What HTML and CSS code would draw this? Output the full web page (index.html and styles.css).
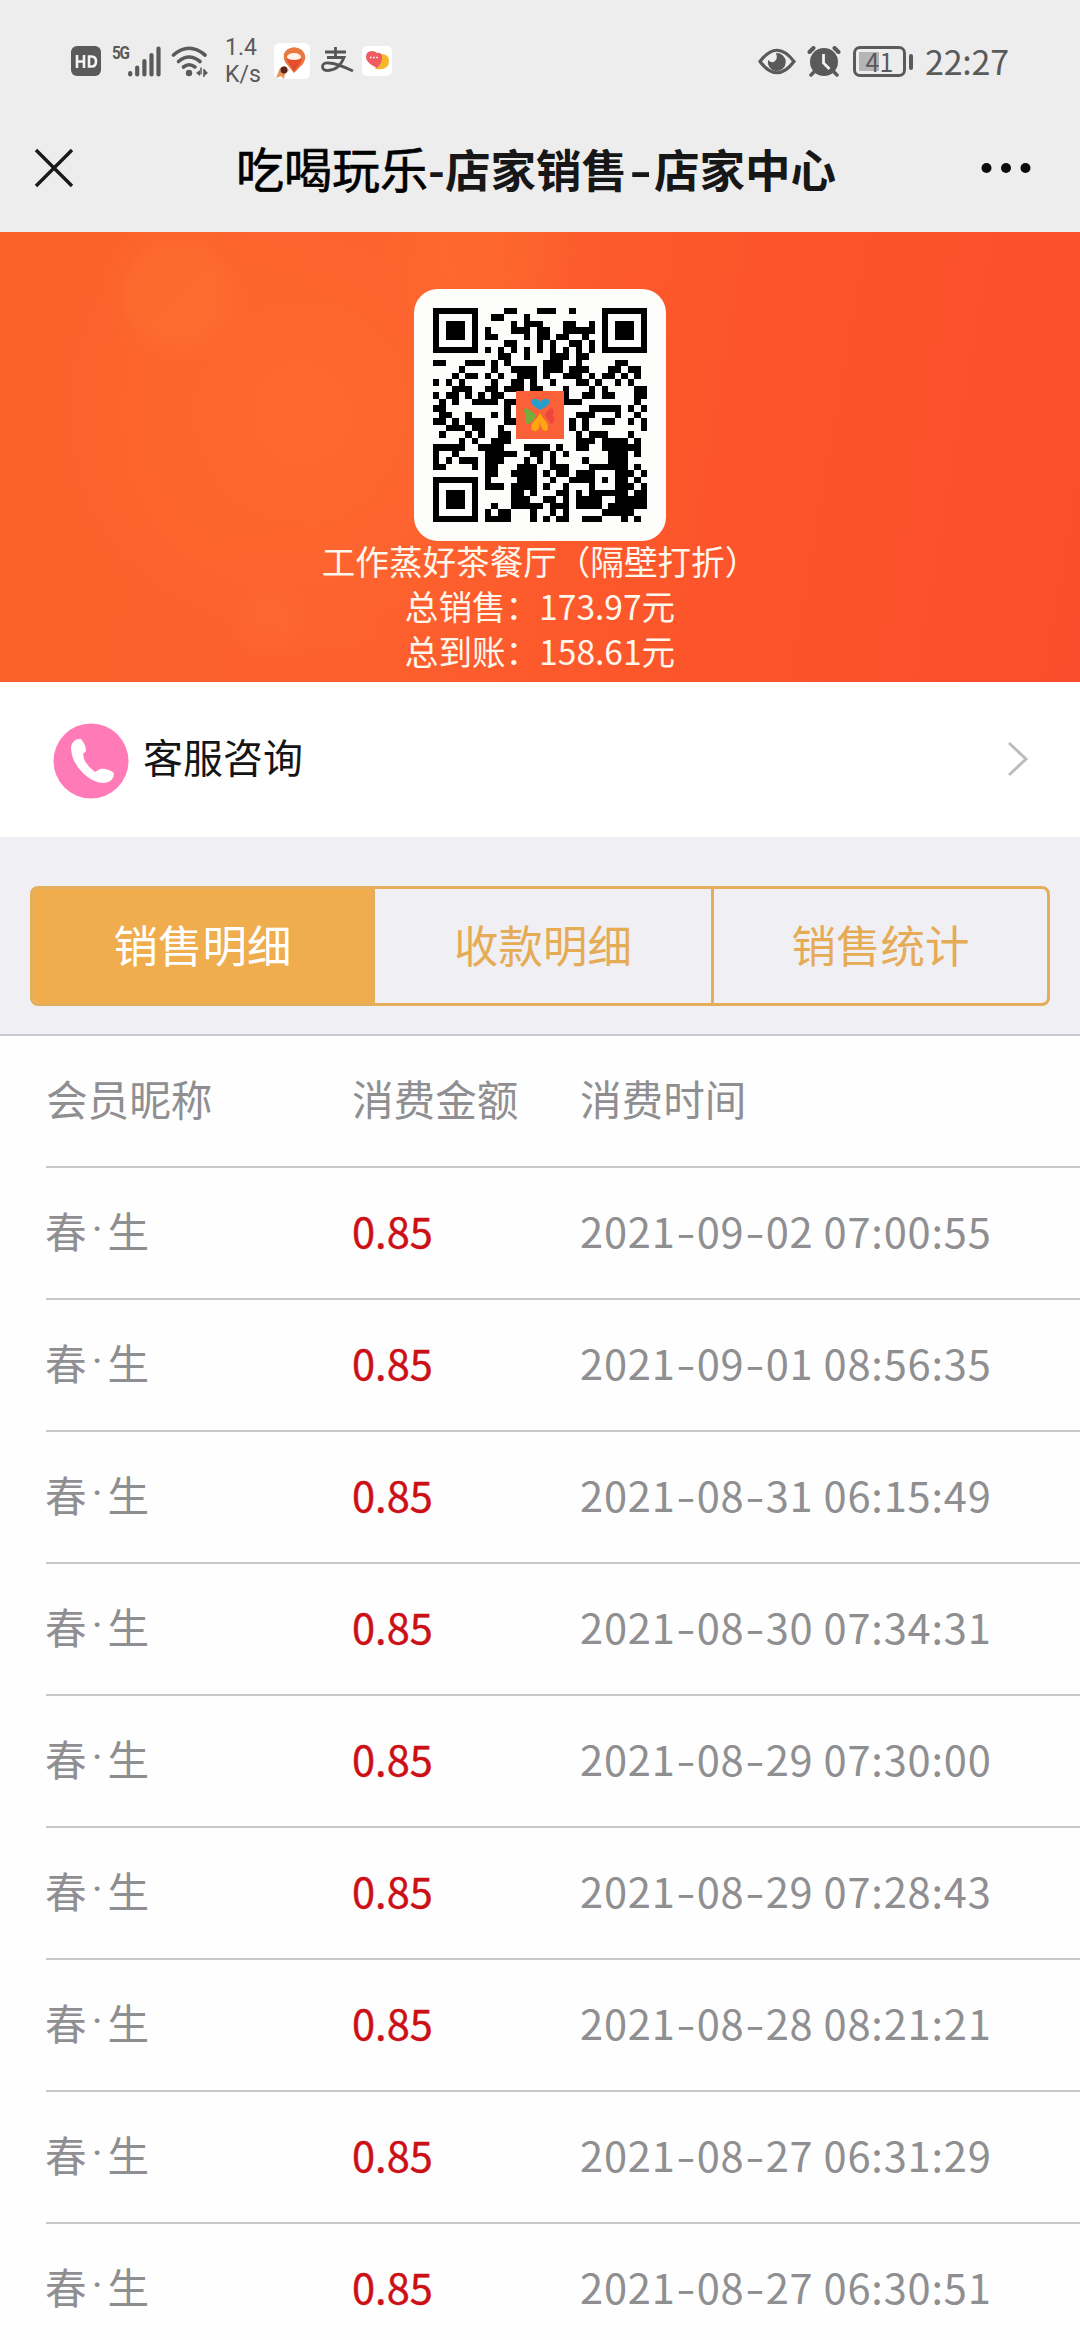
FILE: index.html
```html
<!DOCTYPE html>
<html lang="zh-CN">
<head>
<meta charset="utf-8">
<title>吃喝玩乐-店家销售-店家中心</title>
<link rel="stylesheet" href="styles.css">
</head>
<body>
<header class="status">
  <div class="status-left">
    <svg class="ic-hd" width="30" height="30" viewBox="0 0 30 30"><rect width="30" height="30" rx="6" fill="#5a5a5a"/><path d="M6 9v13M13 9v13M6 15.5h7M18 10.5v10h2.500q4.500 0 4.500-5t-4.500-5z" fill="none" stroke="#f4f4f4" stroke-width="2.600"/></svg>
    <span class="net">5G</span>
    <svg class="ic-bars" width="33" height="31" viewBox="0 0 33 31"><path d="M2.200 27v1.500M9.200 21.500v7M16.400 15v13.500M23.500 9v19.500M30.500 2.500v26" stroke="#5a5a5a" stroke-width="4.200" stroke-linecap="round"/></svg>
    <svg class="ic-wifi" width="38" height="31" viewBox="0 0 38 31"><g fill="none" stroke="#5a5a5a" stroke-width="3.600" stroke-linecap="round"><path d="M2.500 9Q18 -4.500 34 9"/><path d="M7.500 15.500Q18 6.500 29 15.500"/><path d="M12.500 21Q18 16.500 24 21"/></g><circle cx="18" cy="27" r="3.200" fill="#5a5a5a"/><path d="M25 27l4-3v6zM37 27l-4-4v7z" fill="#5a5a5a"/><path d="M30 21.500v7M33 23v8" stroke="#5a5a5a" stroke-width="1.500"/></svg>
    <span class="speed"><span>1.4</span><span>K/s</span></span>
    <svg class="ic-pin" width="36" height="36" viewBox="0 0 36 36"><rect width="36" height="36" rx="5" fill="#fff"/><path d="M20 30L11 19Q7 10 14 6t14 1q6 6 1 14z" fill="#e87842"/><path d="M13 17h15l-8 12z" fill="#e24b2d"/><ellipse cx="20" cy="14" rx="7" ry="4" fill="#fff4e8"/><path d="M12 15q8 4 16 0l-3 6h-9z" fill="#e84d2f"/><path d="M2 35l4-10 5-2 4 4-4 4-1 5-3-3z" fill="#e8935c"/><circle cx="10" cy="27" r="3.400" fill="#5a241c"/></svg>
    <svg class="ic-pay" width="33" height="28" viewBox="0 0 33 28"><path d="M4 5h21M14.500 0v10M6 10.500h17Q18 23 7 23.500q-5.500 0-5.500-4T8 16q7 0 24 8" fill="none" stroke="#555" stroke-width="2.800"/></svg>
    <svg class="ic-chat" width="30" height="30" viewBox="0 0 30 30"><rect width="30" height="30" rx="5" fill="#fff"/><path d="M13 23q14 2 14-8 0-7-8-7z" fill="#f7b52c"/><path d="M15 22Q4 17 4 11q0-6 6-6 3 0 5 2 5-1 5 5 0 5-5 10z" fill="#ef5a63"/><path d="M8 11.500h8" stroke="#fff" stroke-width="1.400" stroke-dasharray="1.600 1.500"/></svg>
  </div>
  <div class="status-right">
    <svg class="ic-eye" width="38" height="27" viewBox="0 0 38 27"><path d="M2 13.500Q19-9 36 13.500 19 36 2 13.500z" fill="none" stroke="#5a5a5a" stroke-width="3.200"/><path d="M18 5a9 9 0 1 1-8 7q4 4 7 1t1-8z" fill="#5a5a5a"/></svg>
    <svg class="ic-alarm" width="34" height="31" viewBox="0 0 34 31"><circle cx="17" cy="16" r="14" fill="#5a5a5a"/><path d="M2.500 6l4-4M27.500 2l4 4" stroke="#5a5a5a" stroke-width="4" stroke-linecap="round"/><path d="M8 25l-4 4M26 25l4 4" stroke="#5a5a5a" stroke-width="3.500" stroke-linecap="round"/><path d="M16.500 8v9l6 6" fill="none" stroke="#f2f2f2" stroke-width="2.800"/></svg>
    <div class="battery"><span>41</span></div>
    <span class="clock">22:27</span>
  </div>
</header>
<nav class="nav">
  <svg class="close" width="40" height="40" viewBox="0 0 40 40"><path d="M2 2l36 36M38 2L2 38" stroke="#1a1a1a" stroke-width="3.400"/></svg>
  <h1 class="title"><span class="title-main">吃喝玩乐</span>-店家销售<span class="title-dash">-</span>店家中心</h1>
  <svg class="more" width="52" height="12" viewBox="0 0 52 12"><g fill="#0c0c0c"><circle cx="6.500" cy="6" r="5"/><circle cx="26" cy="6" r="5"/><circle cx="45.500" cy="6" r="5"/></g></svg>
</nav>
<section class="hero">
  <div class="qr-card">
    <svg id="qr" width="214" height="214" viewBox="0 0 33 33" shape-rendering="crispEdges"></svg>
    <svg class="qr-logo" width="48" height="48" viewBox="0 0 48 48"><rect width="48" height="48" fill="#fa6138"/><path d="M24 19Q11 12 17 8q5-1 7 3 3-4 8-3 5 5-8 11z" fill="#289fc9"/><path d="M20 24Q7 12 8 21q3 3 1 5 0 6 3 7 6-2 8-9z" fill="#75ac3c"/><path d="M29 24q7-12 9-3-3 3 1 6-2 8-5 5z" fill="#ee463e"/><path d="M24 22l-3 5q-8 7-5 12 5 3 7-2l1-5 2 6q4 4 6 0 1-5-5-11z" fill="#ffa514"/></svg>
  </div>
  <p>工作蒸好茶餐厅（隔壁打折）</p>
  <p>总销售：173.97元</p>
  <p>总到账：158.61元</p>
</section>
<a class="service">
  <svg width="76" height="76" viewBox="0 0 76 76"><circle cx="38" cy="38" r="37.500" fill="#ff7bb8"/><path d="M28 16q-8-1-10 8Q18 39 31 51q10 9 20 9 10-1 10-10-7-5-14-4l-5 3Q34 43 31 36l-1-5 3-3q0-6-5-12z" fill="#fff"/></svg>
  <span>客服咨询</span>
  <svg class="chevron" width="22" height="38" viewBox="0 0 22 38"><path d="M2 3l17 16L2 35" fill="none" stroke="#bdbdbd" stroke-width="3"/></svg>
</a>
<div class="tabs-wrap">
  <div class="tabs"><div class="tab active">销售明细</div><div class="tab">收款明细</div><div class="tab">销售统计</div></div>
</div>
<main class="list">
  <div class="row"><span>会员昵称</span><span>消费金额</span><span>消费时间</span></div>
  <div class="row"><span class="name">春<i>·</i>生</span><span class="amt">0.85</span><span class="time">2021<b>-</b>09<b>-</b>02 07:00:55</span></div>
  <div class="row"><span class="name">春<i>·</i>生</span><span class="amt">0.85</span><span class="time">2021<b>-</b>09<b>-</b>01 08:56:35</span></div>
  <div class="row"><span class="name">春<i>·</i>生</span><span class="amt">0.85</span><span class="time">2021<b>-</b>08<b>-</b>31 06:15:49</span></div>
  <div class="row"><span class="name">春<i>·</i>生</span><span class="amt">0.85</span><span class="time">2021<b>-</b>08<b>-</b>30 07:34:31</span></div>
  <div class="row"><span class="name">春<i>·</i>生</span><span class="amt">0.85</span><span class="time">2021<b>-</b>08<b>-</b>29 07:30:00</span></div>
  <div class="row"><span class="name">春<i>·</i>生</span><span class="amt">0.85</span><span class="time">2021<b>-</b>08<b>-</b>29 07:28:43</span></div>
  <div class="row"><span class="name">春<i>·</i>生</span><span class="amt">0.85</span><span class="time">2021<b>-</b>08<b>-</b>28 08:21:21</span></div>
  <div class="row"><span class="name">春<i>·</i>生</span><span class="amt">0.85</span><span class="time">2021<b>-</b>08<b>-</b>27 06:31:29</span></div>
  <div class="row"><span class="name">春<i>·</i>生</span><span class="amt">0.85</span><span class="time">2021<b>-</b>08<b>-</b>27 06:30:51</span></div>
</main>
<script src="qr.js"></script>
</body>
</html>
```

FILE: styles.css
```css
* { box-sizing: border-box; }
body {
  margin: 0;
  width: 1080px;
  height: 2340px;
  overflow: hidden;
  background: #fefefe;
  font-family: "Noto Sans CJK SC", sans-serif;
  display: flex;
  flex-direction: column;
}
svg { display: block; flex: none; }

.status {
  height: 110px;
  flex: none;
  background: #ededed;
  color: #5a5a5a;
  display: flex;
  justify-content: space-between;
  padding: 14px 72px 0 71px;
}
.status-left, .status-right { display: flex; align-items: center; height: 96px; padding-bottom: 2px; }
.net { font: 700 18px/18px Roboto, sans-serif; margin: 0 0 16px 11px; width: 16px; letter-spacing: -1.5px; transform: scaleX(.85); transform-origin: left; }
.ic-wifi { margin-left: 10px; }
.speed { display: flex; flex-direction: column; width: 36px; margin-left: 16px; font: 400 23px/27px Roboto, sans-serif; white-space: nowrap; }
.ic-pin { margin-left: 13px; }
.ic-pay { margin-left: 11px; }
.ic-chat { margin-left: 8px; }
.ic-alarm { margin-left: 11px; }
.battery {
  width: 53px; height: 31px; margin-left: 12px;
  border: 3px solid #5a5a5a; border-radius: 7px;
  background: linear-gradient(#b5b5b5, #b5b5b5) 3px 3px / 20px 19px no-repeat;
  font: 400 25px/24px "Noto Sans CJK SC", sans-serif;
  text-align: center; position: relative;
}
.battery::after { content: ""; position: absolute; right: -10px; top: 5px; width: 4px; height: 16px; background: #5a5a5a; border-radius: 2px; }
.clock { font-size: 34px; line-height: 40px; margin-left: 19px; width: 83px; letter-spacing: -.2px; white-space: nowrap; }

.nav {
  height: 122px;
  flex: none;
  background: #ededed;
  display: flex;
  align-items: center;
  justify-content: space-between;
  padding: 0 48px 7px 34px;
}
.title { margin: 0 0 0 18px; font-size: 45.500px; line-height: 60px; font-weight: 700; color: #171717; white-space: nowrap; display: flex; align-items: baseline; }
.title-main { font-size: 48px; font-weight: 400; color: #000; -webkit-text-stroke: .7px #000; }
.title-dash { width: 27px; text-align: center; transform: scaleX(1.35); }

.hero {
  height: 450px;
  flex: none;
  display: flex;
  flex-direction: column;
  align-items: center;
  padding-top: 57px;
  color: #fff6ec;
  background:
    radial-gradient(circle at 175px 60px, rgba(255, 125, 50, .28) 0 40px, transparent 75px),
    radial-gradient(circle at 480px 20px, rgba(255, 125, 50, .25) 0 40px, transparent 100px),
    radial-gradient(circle at 270px 390px, rgba(255, 110, 55, .3) 0 20px, transparent 42px),
    radial-gradient(circle at 300px 180px, rgba(255, 112, 52, .6), transparent 260px),
    linear-gradient(100deg, #fb612b 0%, #fd602d 38%, #fc552b 65%, #fb4d2b 100%);
}
.qr-card { width: 252px; height: 252px; flex: none; border-radius: 24px; background: #fdfefc; display: grid; place-items: center; margin-bottom: -3px; }
.qr-card > svg { grid-area: 1 / 1; }
.hero p { margin: 0; font-size: 33.600px; line-height: 45px; white-space: nowrap; }

.service { height: 155px; flex: none; display: flex; align-items: center; padding: 0 51px 0 53px; background: #fff; color: #151515; font-size: 40px; line-height: 60px; }
.service svg:first-child { margin-top: 2px; }
.service span { margin: -7px 0 0 14px; }
.chevron { margin: -1px 0 0 auto; }

.tabs-wrap { height: 199px; flex: none; background: #efeff4; border-bottom: 2px solid #c8c7cc; padding: 49px 30px 0; }
.tabs { height: 120px; display: grid; grid-template-columns: 339px 339px 336px; border: 3px solid #e4ad5a; border-radius: 8px; overflow: hidden; }
.tab { display: flex; align-items: center; justify-content: center; font-size: 44.500px; line-height: 60px; color: #e6ab55; padding: 0 0 4px; }
.tab + .tab { border-left: 3px solid #e4ad5a; }
.tab.active { background: #f0ad4e; color: #fff; }

.list { padding-left: 46px; color: #8f8f91; }
.row { height: 132px; flex: none; display: grid; grid-template-columns: 306px 228px 1fr; align-items: center; font-size: 41.600px; line-height: 60px; border-bottom: 2px solid #c8c7cc; padding-bottom: 6px; white-space: nowrap; }
.name { display: flex; margin-left: -1px; }
.row i { width: 21px; text-align: center; font-family: Roboto, sans-serif; font-style: normal; }
.row b { display: inline-block; width: 21.200px; font-weight: 400; transform: scaleX(1.35); text-align: center; }
.amt { color: #cc1018; -webkit-text-stroke: .4px #cc1018; }
.time { letter-spacing: .8px; }
```

FILE: qr.js
```js
// Dark modules of each row, as columns or inclusive column ranges.
const rows = [
  '11-12 16-18 21', '9-10 14', '12 14-16 20-21 24', '8 12-14 16-17 20-24',
  '8-9 14 16-17 19-20 23', '11-12 16 18 21-22 24', '8 10 12 14 16 18 20 22 24',
  '10-11 14 18-20 22-23', '0-1 5-7 9 11 17-19 22 28-29',
  '4 9 12-15 17-19 21-23 27-28 30-31', '3 5-6 8 10 13-15 17 20-22 24 26-27 29 31',
  '0 2 4 9 12-13 15 18 22-23 25 28 30', '3-5 8-9 11-13 15-16 20 24 26 31-32',
  '0 2-3 5 7 9-10 20 23-24 26-27 31-32', '1 3 6-9 11-12 20-22 31',
  '0-1 11 24-28 30 32', '1-2 5 9 11 22-24 28 31', '0-1 3 5-7 11-12 21 23 26-27 30 32',
  '2-4 6-7 10 21 23 32', '1 5 7 10-11 22 24-26 30', '4 6 9-11 22-24 26-29 31',
  '0-4 7-10 14-17 19 22-23 26-31', '0 3 8-12 15-16 18 20 27-29 31',
  '0 2 4-6 8-10 14 16 18 23 27-29', '0-1 6 8-9 13-15 18-20 24-29 31',
  '8-9 12-15 17 19-20 22-24 28-30 32', '8 13-15 18 21-24 26 28-29 31',
  '8-10 12-15 17 20 24 28-30 32', '12-13 15 19-20 22 24-29 31-32',
  '12-14 17-18 20 22-25 28-32', '9 12-16 18-20 22-25 27-32',
  '8 10-11 15 18 20 26-30', '8-11 15 17 19-20 23-25 29 31'
];
let d = '';
rows.forEach((row, y) => {
  row.split(' ').forEach(run => {
    const [a, b = a] = run.split('-').map(Number);
    d += `M${a} ${y}h${b - a + 1}v1H${a}z`;
  });
});
// Finder squares in three corners.
[[0, 0], [26, 0], [0, 26]].forEach(([x, y]) => {
  d += `M${x} ${y}h7v7h-7zM${x + 1} ${y + 1}v5h5v-5zM${x + 2} ${y + 2}h3v3h-3z`;
});
document.getElementById('qr').innerHTML = `<path d="${d}" fill="#000"/>`;
```
